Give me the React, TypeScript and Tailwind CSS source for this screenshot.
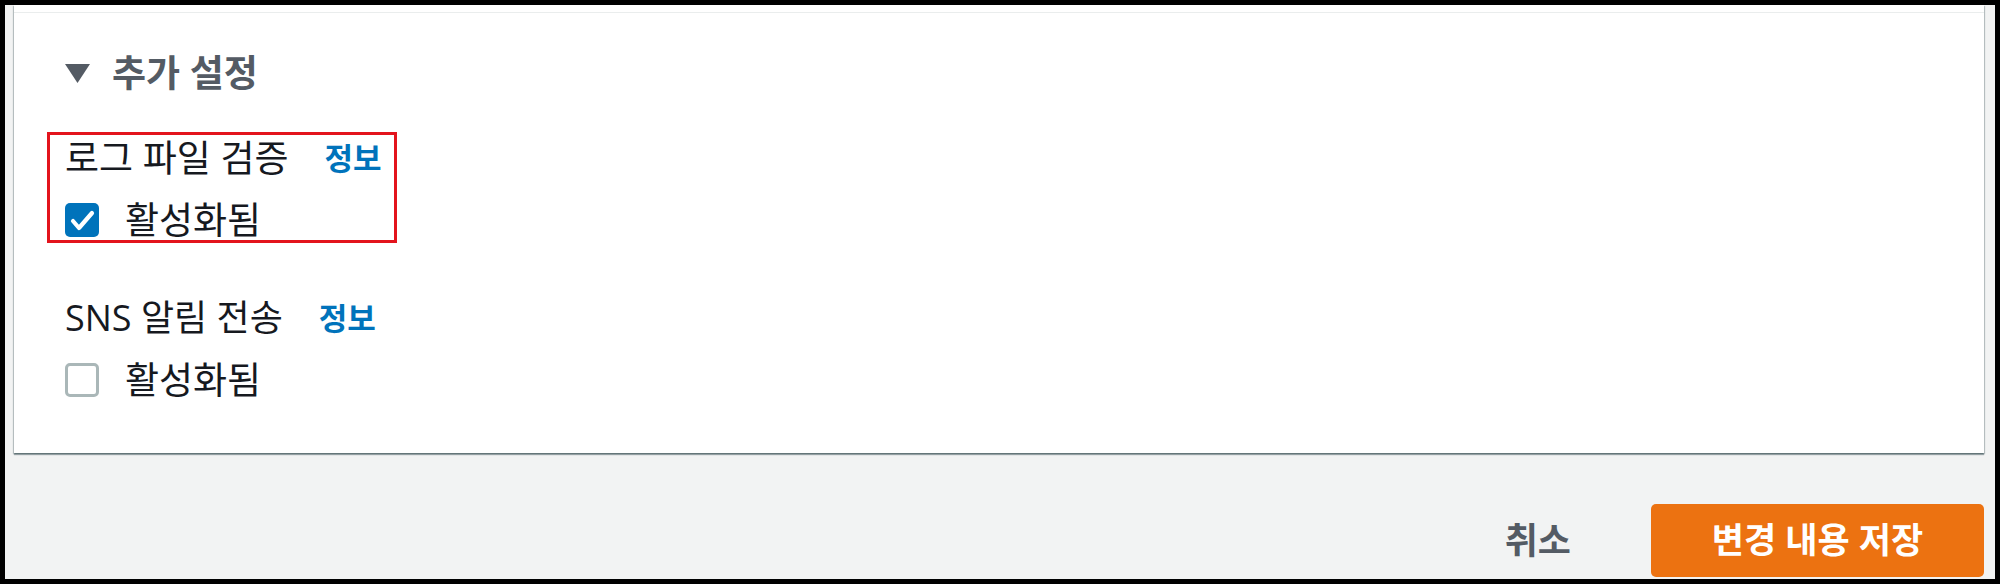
import React from "react";

const font = { fontFamily: '"Open Sans", "Noto Sans CJK KR", sans-serif' };

function Checkbox({ checked }: { checked: boolean }) {
  if (checked) {
    return (
      <span className="w-[34px] h-[34px] rounded-[5px] bg-[#0073bb] flex items-center justify-center shrink-0">
        <svg width="34" height="34" viewBox="0 0 34 34">
          <polyline
            points="8,18 14,25 27,10"
            fill="none"
            stroke="#ffffff"
            strokeWidth="4.2"
            strokeLinecap="round"
            strokeLinejoin="round"
          />
        </svg>
      </span>
    );
  }
  return (
    <span className="w-[34px] h-[34px] rounded-[5px] border-[3px] border-[#aab7b8] bg-white shrink-0" />
  );
}

export default function App() {
  return (
    <div className="w-[2000px] h-[584px] bg-black p-[5px]" style={font}>
      <div className="w-full h-full bg-[#f2f3f3] pl-[9px] pr-[11px] flex flex-col overflow-hidden">
        <section className="bg-white pt-[7px] shadow-[0_2px_1px_0_rgba(0,28,36,0.35),1px_1px_1px_0_rgba(0,28,36,0.2),-1px_1px_1px_0_rgba(0,28,36,0.2)]">
          <div className="border-t border-[#eaeded] pt-[40px] pb-[53px] pl-[51px]">
            <div className="h-[40px] flex items-center">
              <svg width="25" height="19" viewBox="0 0 25 19" className="mr-[22px]">
                <polygon points="0,0 25,0 12.5,19" fill="#545b64" />
              </svg>
              <h2 className="text-[37px] leading-[40px] font-bold text-[#545b64]">추가 설정</h2>
            </div>

            {/* highlighted field */}
            <div className="mt-[39px] -ml-[18px] w-[350px] border-[3px] border-[#e3141d] pl-[15px] pt-[3px] flex flex-col">
              <div className="h-[40px] flex items-center">
                <span className="text-[37px] leading-[40px] text-[#16191f]">로그 파일 검증</span>
                <a className="ml-[36px] text-[31px] leading-[40px] font-bold text-[#0073bb]">정보</a>
              </div>
              <label className="mt-[22px] h-[40px] flex items-center">
                <Checkbox checked={true} />
                <span className="ml-[26px] text-[37px] leading-[40px] text-[#16191f]">활성화됨</span>
              </label>
            </div>

            <div className="mt-[55px] flex flex-col">
              <div className="h-[40px] flex items-center">
                <span className="text-[36px] leading-[40px] text-[#16191f]">SNS 알림 전송</span>
                <a className="ml-[36px] text-[31px] leading-[40px] font-bold text-[#0073bb]">정보</a>
              </div>
              <label className="mt-[22px] h-[40px] flex items-center">
                <Checkbox checked={false} />
                <span className="ml-[26px] text-[37px] leading-[40px] text-[#16191f]">활성화됨</span>
              </label>
            </div>
          </div>
        </section>

        <div className="mt-[51px] flex items-center justify-end shrink-0">
          <button className="mr-[80px] text-[36px] leading-[40px] font-bold text-[#545b64]">취소</button>
          <button className="h-[73px] w-[333px] rounded-[5px] bg-[#ec7211] text-white text-[35px] font-bold flex items-center justify-center">
            변경 내용 저장
          </button>
        </div>
      </div>
    </div>
  );
}
